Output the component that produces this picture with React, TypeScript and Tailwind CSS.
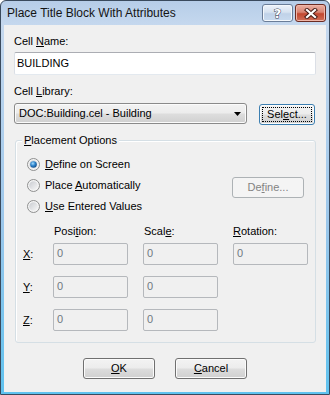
import React from "react";

function U({ children }: { children: React.ReactNode }) {
  return <span className="underline underline-offset-[1px] decoration-[1px]">{children}</span>;
}

const btnBg =
  "bg-[linear-gradient(180deg,#f3f3f3_0%,#ececec_48%,#dddddd_52%,#d0d0d0_100%)] shadow-[inset_0_0_0_1px_#fbfbfb]";

function Radio({ checked }: { checked?: boolean }) {
  return (
    <svg width="13" height="13" viewBox="0 0 13 13" className="shrink-0">
      <defs>
        <linearGradient id="rbg" x1="0" y1="0" x2="1" y2="1">
          <stop offset="0" stopColor="#c9ccd1" />
          <stop offset="1" stopColor="#f7f7f7" />
        </linearGradient>
        <radialGradient id="rdot" cx="0.4" cy="0.35" r="0.75">
          <stop offset="0" stopColor="#a6dcfb" />
          <stop offset="0.45" stopColor="#2f86cf" />
          <stop offset="1" stopColor="#0b3d77" />
        </radialGradient>
      </defs>
      <circle cx="6.5" cy="6.5" r="6" fill="#f4f4f4" stroke="#8e8f8f" />
      <circle cx="6.5" cy="6.5" r="4.3" fill="url(#rbg)" />
      {checked && <circle cx="6.5" cy="6.5" r="3.3" fill="url(#rdot)" />}
    </svg>
  );
}

function DisInput() {
  return (
    <div className="w-[75px] h-[22px] border border-[#b5b8bc] rounded-[2px] bg-[#f0f0f0] text-[#6f7880] pl-[3px] pt-[3px] leading-[13px]">
      0
    </div>
  );
}

export default function App() {
  return (
    <div className="w-[330px] h-[395px] bg-white">
      <div className="w-[330px] h-[395px] flex flex-col border border-[#3a4a5d] rounded-t-[6px] overflow-hidden bg-[linear-gradient(180deg,#b6cde8_0px,#c5d8ee_24px,#9cc7eb_220px,#5fc2ef_100%)] font-['Liberation_Sans',Arial,sans-serif] text-[11px] text-black">
        {/* Title bar */}
        <div className="h-[24px] shrink-0 flex items-start justify-between pl-[6px] pr-[3px]">
          <div className="text-[12px] leading-[14px] mt-[5px] text-[#141414]">Place Title Block With Attributes</div>
          <div className="flex gap-[2px] mt-[3px]">
            <div className="w-[31px] h-[18px] rounded-[3px] border border-[#6a7d98] bg-[linear-gradient(180deg,#eef3fa_0%,#d6e2f0_45%,#c0d2e8_55%,#c9dbef_100%)] shadow-[inset_0_0_0_1px_#f4f8fc] flex items-center justify-center">
              <span className="font-['DejaVu_Sans',sans-serif] font-bold text-[13px] leading-[13px] text-white [-webkit-text-stroke:1px_#3c4656] [paint-order:stroke_fill]">?</span>
            </div>
            <div className="w-[31px] h-[18px] rounded-[3px] border border-[#6b2b22] bg-[linear-gradient(180deg,#eab0a3_0%,#d88472_45%,#c2472f_55%,#d0705a_100%)] shadow-[inset_0_0_0_1px_#f0b6a8] flex items-center justify-center">
              <svg width="14" height="11" viewBox="0 0 14 11">
                <path d="M3 2 L11 9 M11 2 L3 9" stroke="#4a1e18" strokeWidth="4.2" strokeLinecap="square" fill="none" />
                <path d="M3 2 L11 9 M11 2 L3 9" stroke="#ffffff" strokeWidth="2.2" strokeLinecap="square" fill="none" />
              </svg>
            </div>
          </div>
        </div>

        {/* Client area */}
        <div className="flex-1 mx-[3px] mb-[2px] bg-[#f0f0f0] flex flex-col px-[10px]">
          <div className="mt-[10px] leading-[13px]">
            Cell <U>N</U>ame:
          </div>
          <div className="mt-[4px] h-[23px] border border-[#abadb3] border-x-[#dbdfe6] border-b-[#e3e9ef] rounded-[2px] bg-white pl-[2px] flex items-center">
            BUILDING
          </div>

          <div className="mt-[10px] leading-[13px]">
            Cell <U>L</U>ibrary:
          </div>
          <div className="mt-[5px] flex items-start">
            <div className={`w-[233px] h-[21px] border border-[#8a8a8a] rounded-[3px] ${btnBg} flex items-center pl-[4px] pr-[5px]`}>
              <span className="flex-1">DOC:Building.cel - Building</span>
              <svg width="7" height="4" viewBox="0 0 7 4">
                <path d="M0 0 H7 L3.5 4 Z" fill="#000" />
              </svg>
            </div>
            <div className={`ml-[12px] mt-[1px] w-[56px] h-[21px] border border-[#3c7fb1] rounded-[3px] ${btnBg} p-[2px] flex`}>
              <div className="flex-1 border border-dotted border-[#000] flex items-center justify-center leading-[13px]">
                Sel<U>e</U>ct...
              </div>
            </div>
          </div>

          {/* Group box */}
          <div className="relative mt-[15px] ml-[1px] border border-[#d5dfe5] rounded-[3px] shadow-[inset_1px_1px_0_#ffffff] flex flex-col pb-[11px]">
            <div className="absolute -top-[7px] left-[6px] px-[2px] bg-[#f0f0f0] leading-[13px]">
              <U>P</U>lacement Options
            </div>
            <div className="flex justify-between pt-[13px] pl-[11px] pr-[11px]">
              <div className="flex flex-col">
                <div className="h-[21px] flex items-center gap-[5px]">
                  <Radio checked />
                  <span><U>D</U>efine on Screen</span>
                </div>
                <div className="h-[21px] flex items-center gap-[5px]">
                  <Radio />
                  <span>Place <U>A</U>utomatically</span>
                </div>
                <div className="h-[21px] flex items-center gap-[5px]">
                  <Radio />
                  <span><U>U</U>se Entered Values</span>
                </div>
              </div>
              <div className="mt-[23px] w-[72px] h-[21px] border border-[#adb2b5] rounded-[3px] bg-[#f4f4f4] text-[#838383] flex items-center justify-center">
                De<U>f</U>ine...
              </div>
            </div>

            <div className="mt-[8px] grid grid-cols-[15px_75px_75px_75px] gap-x-[15px] gap-y-[11px] pl-[7px] items-center">
              <div />
              <div className="leading-[13px] pl-[1px] -mb-[6px]">Posi<U>t</U>ion:</div>
              <div className="leading-[13px] pl-[1px] -mb-[6px]">Scal<U>e</U>:</div>
              <div className="leading-[13px] -mb-[6px]"><U>R</U>otation:</div>

              <div className="leading-[13px]"><U>X</U>:</div>
              <DisInput />
              <DisInput />
              <DisInput />

              <div className="leading-[13px]"><U>Y</U>:</div>
              <DisInput />
              <DisInput />
              <div />

              <div className="leading-[13px]"><U>Z</U>:</div>
              <DisInput />
              <DisInput />
              <div />
            </div>
          </div>

          <div className="mt-[15px] flex justify-center gap-[20px]">
            <div className={`w-[72px] h-[21px] border border-[#707070] rounded-[3px] ${btnBg} flex items-center justify-center`}>
              <U>O</U>K
            </div>
            <div className={`w-[72px] h-[21px] border border-[#707070] rounded-[3px] ${btnBg} flex items-center justify-center`}>
              <U>C</U>ancel
            </div>
          </div>
        </div>
      </div>
    </div>
  );
}
